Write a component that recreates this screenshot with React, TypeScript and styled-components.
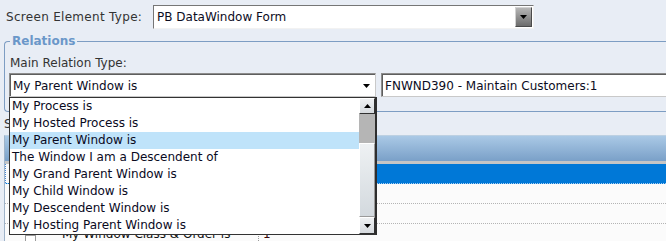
import React from "react";
import styled, { createGlobalStyle } from "styled-components";

const Global = createGlobalStyle`
  html, body { margin: 0; padding: 0; background: #e8edf5; overflow: hidden; }
  body { font-family: "DejaVu Sans", Verdana, sans-serif; font-size: 12px; }
`;

const Page = styled.div`
  position: relative;
  width: 666px;
  height: 241px;
  overflow: hidden;
  background: #e8edf5;
  color: #333;
`;

const TopRow = styled.div`
  display: flex;
  align-items: center;
  height: 24px;
  padding: 5px 0 0 6px;
`;

const FieldLabel = styled.label<{ $w?: number; $spacing?: number }>`
  display: block;
  flex: 0 0 ${(p) => (p.$w ? `${p.$w}px` : "auto")};
  line-height: 14px;
  color: #333;
  letter-spacing: ${(p) => p.$spacing ?? 0}px;
  white-space: nowrap;
`;

const Combo = styled.div<{ $w: number }>`
  box-sizing: border-box;
  width: ${(p) => p.$w}px;
  height: 24px;
  display: flex;
  align-items: center;
  background: #fff;
  border: 1px solid;
  border-color: #767676 #f2f2f2 #f2f2f2 #767676;
  padding: 1px;
`;

const ComboText = styled.span`
  flex: 1;
  padding-left: 2px;
  line-height: 14px;
  color: #0c0c1e;
  white-space: nowrap;
  overflow: hidden;
`;

const DropButton = styled.div`
  box-sizing: border-box;
  width: 17px;
  align-self: stretch;
  display: flex;
  align-items: center;
  justify-content: center;
  background: linear-gradient(#b6b6b6, #6c6c6c);
  border: 1px solid;
  border-color: #d2d2d2 #4a4a4a #4a4a4a #d2d2d2;
`;

const Group = styled.fieldset`
  box-sizing: border-box;
  width: 720px;
  min-width: 0;
  margin: 5px 0 0 4px;
  padding: 8px 0 14px 5px;
  border: 1px solid #7d9dc3;
  border-right: none;
  border-radius: 4px 0 0 4px;
`;

const Legend = styled.legend`
  padding: 0 2px;
  margin: 0;
  font-weight: bold;
  font-size: 12px;
  line-height: 14px;
  color: #6b97c9;
`;

const FieldRow = styled.div`
  display: flex;
  align-items: center;
  margin-top: 3px;
`;

const Sunken = styled.div<{ $w?: number }>`
  box-sizing: border-box;
  ${(p) => (p.$w ? `width: ${p.$w}px;` : "flex: 1;")}
  height: 24px;
  display: flex;
  align-items: center;
  background: #fff;
  border: 1px solid;
  border-color: #8c8c8c #c9c9c9 #c9c9c9 #8c8c8c;
  box-shadow: inset 1px 1px 0 #5e5e5e;
  padding: 1px 0 0 1px;
`;

const RelCombo = styled(Sunken)`
  margin-left: -1px;
`;

const TextBox = styled(Sunken)`
  margin-left: 5px;
`;

const PlainArrow = styled.div`
  width: 18px;
  display: flex;
  justify-content: center;
  align-items: center;
`;

const SubLabel = styled(FieldLabel)`
  margin: 5px 0 0 4px;
`;

const Grid = styled.div`
  margin: 4px 0 0 4px;
  height: 110px;
  border-left: 1px solid #9fb3c9;
  border-top: 1px solid #bcd0e2;
  background: #fbfbfb;
`;

const GridHeader = styled.div`
  height: 25px;
  background: linear-gradient(#aac9e6, #7aa0c8);
  border-bottom: 3px solid #c5c5c5;
`;

const Row = styled.div<{ $selected?: boolean }>`
  box-sizing: border-box;
  height: 20px;
  display: flex;
  border-bottom: 1px dotted ${(p) => (p.$selected ? "#a8d0f4" : "#b4b4b4")};
  background: ${(p) => (p.$selected ? "#0078d7" : "#fbfbfb")};
`;

const Indicator = styled.div<{ $focus?: boolean }>`
  flex: 0 0 5px;
  box-sizing: border-box;
  background: #fbfbfb;
  border-left: 1px dotted ${(p) => (p.$focus ? "#4a8ad8" : "transparent")};
`;

const CheckCell = styled.div`
  flex: 0 0 49px;
  display: flex;
`;

const CheckBox = styled.span`
  box-sizing: border-box;
  width: 11px;
  height: 12px;
  margin: 11px 0 0 15px;
  border: 1px solid #9a9a9a;
  background: #fff;
`;

const TextCell = styled.div`
  flex: 0 0 199px;
  box-sizing: border-box;
  padding: 3px 0 0 3px;
  line-height: 14px;
  color: #111;
  white-space: nowrap;
`;

const ValueCell = styled.div`
  flex: 1;
  box-sizing: border-box;
  padding: 3px 0 0 4px;
  line-height: 14px;
  color: #3a0a0a;
  border-left: 1px dotted #9a9a9a;
`;

const List = styled.div`
  position: absolute;
  left: 9px;
  top: 97px;
  box-sizing: border-box;
  width: 368px;
  height: 138px;
  display: flex;
  background: #fff;
  border: 1px solid #333;
  border-right: 2px solid #2e2e2e;
`;

const Items = styled.ul`
  flex: 1;
  margin: 0;
  padding: 0;
  list-style: none;
`;

const Item = styled.li<{ $active?: boolean }>`
  height: 17px;
  line-height: 17px;
  padding-left: 2px;
  color: #0a0a1e;
  white-space: nowrap;
  background: ${(p) => (p.$active ? "#bfe3fa" : "transparent")};
`;

const ScrollBar = styled.div`
  flex: 0 0 16px;
  display: flex;
  flex-direction: column;
`;

const ScrollBtn = styled.div<{ $h: number }>`
  box-sizing: border-box;
  height: ${(p) => p.$h}px;
  display: flex;
  align-items: center;
  justify-content: center;
  background: linear-gradient(#eef0f2, #d6dade);
  border: 1px solid;
  border-color: #ffffff #303030 #303030 #ffffff;
`;

const Track = styled.div<{ $h: number }>`
  height: ${(p) => p.$h}px;
  background: #b5b5b5;
`;

const Thumb = styled.div<{ $h: number }>`
  box-sizing: border-box;
  height: ${(p) => p.$h}px;
  background: linear-gradient(#eef1f3, #d3d9de);
  border: 1px solid;
  border-color: #ffffff #9a9a9a #9a9a9a #ffffff;
`;

const Tri = ({ up }: { up?: boolean }) => (
  <svg width="7" height="4" viewBox="0 0 7 4">
    <polygon points={up ? "3.5,0 7,4 0,4" : "0,0 7,0 3.5,4"} fill="#000" />
  </svg>
);

const options = [
  "My Process is",
  "My Hosted Process is",
  "My Parent Window is",
  "The Window I am a Descendent of",
  "My Grand Parent Window is",
  "My Child Window is",
  "My Descendent Window is",
  "My Hosting Parent Window is",
];

export default function App() {
  return (
    <Page>
      <Global />
      <TopRow>
        <FieldLabel $w={147} $spacing={0.3}>Screen Element Type:</FieldLabel>
        <Combo $w={381}>
          <ComboText>PB DataWindow Form</ComboText>
          <DropButton>
            <Tri />
          </DropButton>
        </Combo>
      </TopRow>

      <Group>
        <Legend>Relations</Legend>
        <FieldLabel>Main Relation Type:</FieldLabel>
        <FieldRow>
          <RelCombo $w={367}>
            <ComboText>My Parent Window is</ComboText>
            <PlainArrow>
              <Tri />
            </PlainArrow>
          </RelCombo>
          <TextBox>
            <ComboText>FNWND390 - Maintain Customers:1</ComboText>
          </TextBox>
        </FieldRow>
      </Group>

      <SubLabel>Sub Relations:</SubLabel>
      <Grid>
        <GridHeader />
        <Row $selected>
          <Indicator $focus />
        </Row>
        <Row>
          <Indicator />
        </Row>
        <Row>
          <Indicator />
        </Row>
        <Row>
          <Indicator />
          <CheckCell>
            <CheckBox />
          </CheckCell>
          <TextCell>My Window Class &amp; Order is</TextCell>
          <ValueCell>1</ValueCell>
        </Row>
      </Grid>

      <List>
        <Items>
          {options.map((o) => (
            <Item key={o} $active={o === "My Parent Window is"}>
              {o}
            </Item>
          ))}
        </Items>
        <ScrollBar>
          <ScrollBtn $h={16}>
            <Tri up />
          </ScrollBtn>
          <Track $h={29} />
          <Thumb $h={74} />
          <ScrollBtn $h={17}>
            <Tri />
          </ScrollBtn>
        </ScrollBar>
      </List>
    </Page>
  );
}
